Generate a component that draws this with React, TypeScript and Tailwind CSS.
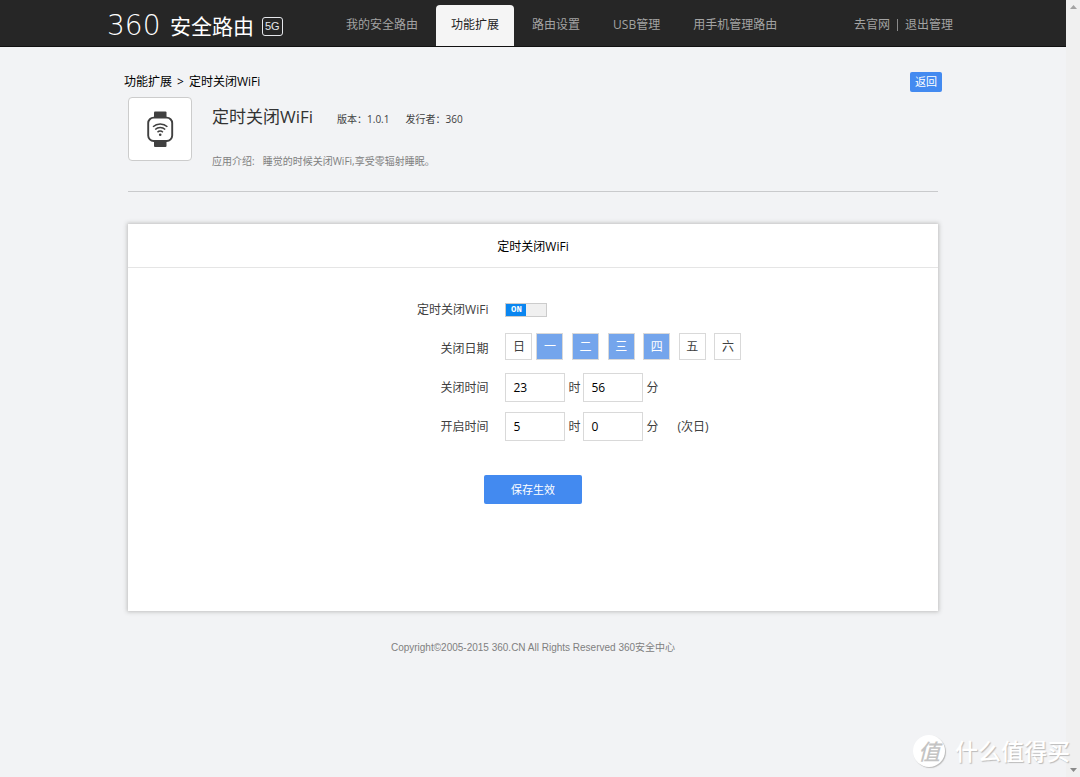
import { useState, type ReactNode } from "react";

const navItems = ["我的安全路由", "功能扩展", "路由设置", "USB管理", "用手机管理路由"];
const days = ["日", "一", "二", "三", "四", "五", "六"];

function WatchIcon() {
  return (
    <svg viewBox="0 0 28 38" className="h-[38px] w-7" aria-hidden="true">
      <rect x="8" y="1.5" width="12.5" height="8" rx="1" fill="#404040" />
      <rect x="8" y="29" width="12.5" height="8" rx="1" fill="#404040" />
      <rect x="2.2" y="7.6" width="24" height="23.4" rx="5.5" fill="#fff" stroke="#404040" strokeWidth="1.9" />
      <g fill="none" stroke="#404040" strokeWidth="1.5">
        <path d="M7 16.8a10.4 10.4 0 0 1 14.4 0" />
        <path d="M9.2 19.6a7 7 0 0 1 10 0" />
        <path d="M11.5 22.2a3.8 3.8 0 0 1 5.4 0" />
      </g>
      <circle cx="14.2" cy="24.8" r="1.3" fill="#404040" />
    </svg>
  );
}

function Header() {
  return (
    <header className="h-[47px] border-b border-[#111] bg-[#262626]">
      <div className="mx-auto flex h-full max-w-[852px]">
        <div className="flex w-[224px] shrink-0 items-center gap-2 pt-[6px] text-white">
          <div className="flex w-[147px] items-center justify-between whitespace-nowrap">
            <span className="font-['DejaVu_Sans'] text-[28px] leading-none font-extralight">360</span>
            <span className="text-[21px] leading-none">安全路由</span>
          </div>
          <span className="rounded-[3px] border border-gray-200 px-[2px] font-['Liberation_Sans'] text-[11px] leading-[17px] text-gray-200">
            5G
          </span>
        </div>
        <nav className="flex items-end gap-[3px] text-[12px]">
          {navItems.map((item) => (
            <a
              key={item}
              href="#"
              className={
                item === "功能扩展"
                  ? "h-[41px] rounded-t-[4px] bg-[#f5f5f5] px-[15px] leading-[40px] whitespace-nowrap text-[#222]"
                  : "h-[41px] px-[15px] leading-[40px] whitespace-nowrap text-[#a3a3a3]"
              }
            >
              {item}
            </a>
          ))}
        </nav>
        <div className="ml-auto flex items-center gap-[7px] pt-1 pr-[6px] text-[12px] whitespace-nowrap text-[#a3a3a3]">
          <a href="#">去官网</a>
          <span className="h-3 border-l border-[#8a8a8a]" />
          <a href="#">退出管理</a>
        </div>
      </div>
    </header>
  );
}

function Row({ label, htmlFor, children }: { label: string; htmlFor: string; children: ReactNode }) {
  return (
    <div className="grid h-[39px] grid-cols-[5fr_6fr] items-center gap-[17px]">
      <label htmlFor={htmlFor} className="text-right">
        {label}
      </label>
      {children}
    </div>
  );
}

function DayBox({ name, id, on, onChange }: { name: string; id?: string; on: boolean; onChange: () => void }) {
  return (
    <label className="relative cursor-pointer">
      <input type="checkbox" id={id} checked={on} onChange={onChange} className="peer sr-only" />
      <span className="flex size-[27px] items-center justify-center border border-[#d9d9d9] bg-white peer-checked:bg-[#74a5ec] peer-checked:text-white">
        {name}
      </span>
    </label>
  );
}

function TimeFields({ id, hour, minute, note }: { id: string; hour: string; minute: string; note?: string }) {
  const box = "h-[29px] w-[60px] border border-[#d9d9d9] bg-white px-[7px] text-[12px] text-black";
  return (
    <div className="flex items-center gap-[3px]">
      <input id={id} type="text" defaultValue={hour} className={box} />
      <label htmlFor={id}>时</label>
      <input id={`${id}-minute`} type="text" defaultValue={minute} className={box} />
      <label htmlFor={`${id}-minute`}>分</label>
      {note && <span className="pl-4">{note}</span>}
    </div>
  );
}

function ScheduleCard() {
  const [enabled, setEnabled] = useState(true);
  const [selected, setSelected] = useState([1, 2, 3, 4]);

  const toggle = (i: number) =>
    setSelected(selected.includes(i) ? selected.filter((d) => d !== i) : [...selected, i]);

  return (
    <section className="mx-1 mt-8 bg-white pb-[107px] shadow-[0_0_4px_1px_#bfbfbf]">
      <h2 className="h-11 border-b border-[#e5e5e5] text-center text-[12px] leading-[46px] text-black">定时关闭WiFi</h2>
      <form className="pt-[22px]" onSubmit={(e) => e.preventDefault()}>
        <Row label="定时关闭WiFi" htmlFor="enabled">
          <div className="flex">
            <label className="relative flex h-[14px] w-[42px] cursor-pointer border border-[#ccc] bg-[#f0f0f0]">
              <input
                id="enabled"
                type="checkbox"
                checked={enabled}
                onChange={() => setEnabled(!enabled)}
                className="peer sr-only"
              />
              <span className="h-3 w-5 bg-[#ccc] text-center font-['Liberation_Mono'] text-[9px] leading-3 font-bold text-white peer-checked:bg-[#0a86f0]">
                {enabled ? "ON" : "OFF"}
              </span>
            </label>
          </div>
        </Row>
        <Row label="关闭日期" htmlFor="day-0">
          <div className="flex gap-1 pb-1">
            <DayBox id="day-0" name={days[0]} on={selected.includes(0)} onChange={() => toggle(0)} />
            <div className="flex w-[205px] justify-between">
              {days.slice(1).map((day, i) => (
                <DayBox key={day} name={day} on={selected.includes(i + 1)} onChange={() => toggle(i + 1)} />
              ))}
            </div>
          </div>
        </Row>
        <Row label="关闭时间" htmlFor="close">
          <TimeFields id="close" hour="23" minute="56" />
        </Row>
        <Row label="开启时间" htmlFor="open">
          <TimeFields id="open" hour="5" minute="0" note="(次日)" />
        </Row>
        <button type="submit" className="mx-auto mt-[29px] block h-[29px] w-[98px] rounded-[2px] bg-[#438af0] text-[11px] text-white">
          保存生效
        </button>
      </form>
    </section>
  );
}

function Scrollbar() {
  return (
    <div className="flex w-[14px] shrink-0 flex-col items-center justify-between bg-[#f0f0f0] py-[5px]" aria-hidden="true">
      <svg viewBox="0 0 7 4" className="h-1 w-[7px]">
        <path d="M0 4 3.5 0 7 4z" fill="#a3a3a3" />
      </svg>
      <svg viewBox="0 0 7 4" className="h-1 w-[7px]">
        <path d="M0 0 3.5 4 7 0z" fill="#8a8a8a" />
      </svg>
    </div>
  );
}

export default function App() {
  return (
    <div className="relative flex min-h-screen bg-[#f2f3f5] font-['Open_Sans','Noto_Sans_CJK_SC',sans-serif] text-[12px] leading-4 text-[#404040]">
      <div className="min-w-0 flex-1">
        <Header />
        <main className="mx-auto max-w-[818px] pt-[25px]">
          <div className="flex h-5 items-center justify-between text-black">
            <div className="flex gap-[5px]">
              <a href="#">功能扩展</a>
              <span>&gt;</span>
              <span>定时关闭WiFi</span>
            </div>
            <button type="button" className="h-5 w-8 rounded-[2px] bg-[#438af0] text-[11px] text-white">
              返回
            </button>
          </div>

          <div className="mx-1 mt-[5px] flex gap-5 border-b border-[#c9cacc] pb-[22px]">
            <div className="flex size-16 shrink-0 items-center justify-center rounded-[4px] border border-[#ccc] bg-white">
              <WatchIcon />
            </div>
            <div className="pt-2">
              <div className="flex h-6 items-center text-[10px]">
                <h1 className="mr-6 text-[17px] leading-6 text-[#333]">定时关闭WiFi</h1>
                <span className="mr-4 pt-1">版本：1.0.1</span>
                <span className="pt-1">发行者：360</span>
              </div>
              <p className="mt-6 flex gap-2 text-[10px] text-[#808080]">
                <span>应用介绍:</span>
                <span>睡觉的时候关闭WiFi,享受零辐射睡眠。</span>
              </p>
            </div>
          </div>

          <ScheduleCard />
        </main>
        <footer className="py-[29px] text-center font-['Liberation_Sans','Noto_Sans_CJK_SC',sans-serif] text-[10px] text-[#808080]">
          Copyright©2005-2015 360.CN All Rights Reserved 360安全中心
        </footer>
      </div>
      <Scrollbar />

      <div className="absolute right-[10px] bottom-[10px] flex items-center gap-[10px] text-white">
        <span className="flex size-8 items-center justify-center rounded-full bg-white text-[22px] font-medium text-[#c4c4c4] italic shadow-[1px_1px_1px_#bbb]">
          值
        </span>
        <span className="text-[23px] leading-8 font-medium [text-shadow:1px_1px_1px_#bbb]">什么值得买</span>
      </div>
    </div>
  );
}
